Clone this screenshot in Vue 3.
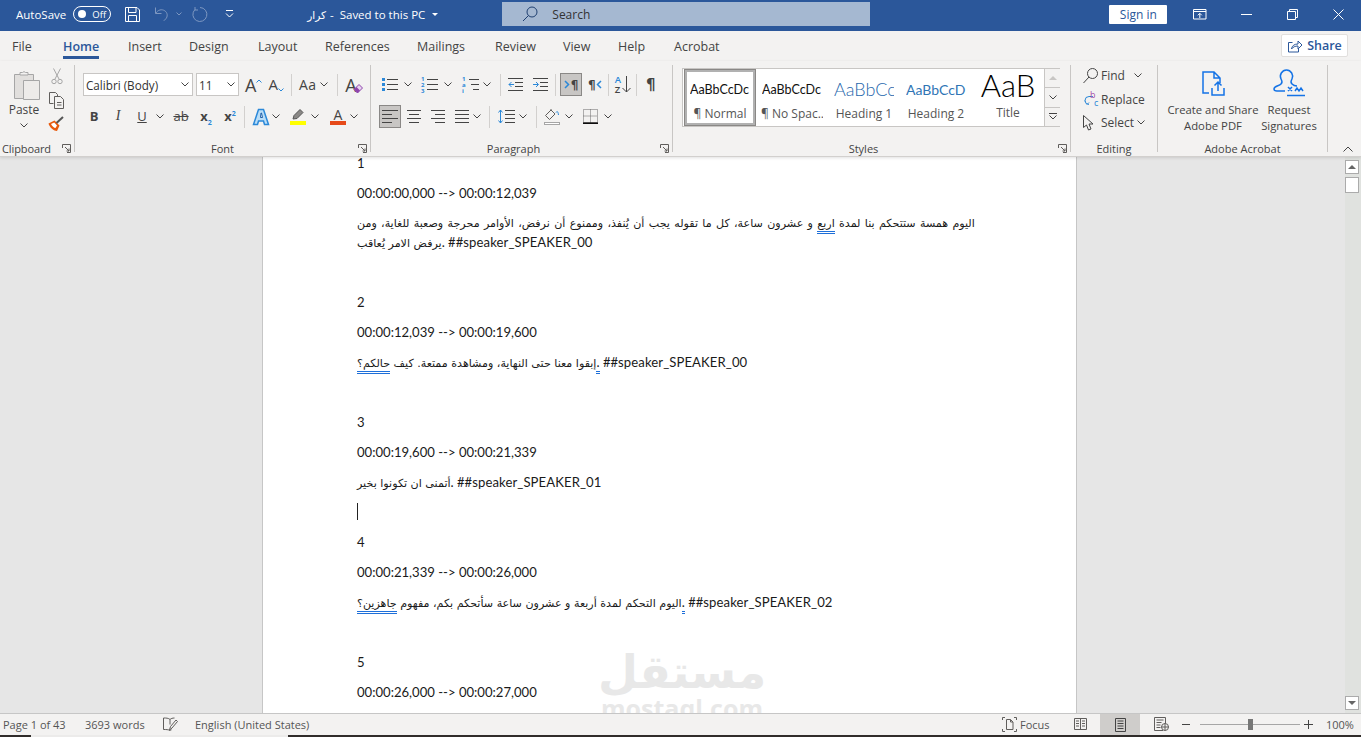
<template>
  <div class="word">
    <header class="titlebar">
      <span class="autosave">AutoSave</span>
      <span class="toggle"><i class="knob"></i><b>Off</b></span>
      <svg class="ic white save" width="17" height="17" viewBox="0 0 17 17"><path d="M1.5 1.5h11.5l2.500 2.500v11.500h-14z M4.500 1.500v5h7.500v-5 M4.500 15.500v-6h8v6" /></svg>
      <svg class="ic dim undo" width="16" height="16" viewBox="0 0 16 16"><path d="M1.500 1.500v6h6 M1.800 7.300c2-3.500 6-4.500 9-2.500 3 2 3 6 1 8l-2 2" /></svg>
      <svg class="ic dim chev-dim" width="6" height="4" viewBox="0 0 6 4"><path d="M.5.500 3 3 5.500.500" /></svg>
      <svg class="ic dim redo" width="17" height="16" viewBox="0 0 17 16"><path d="M3 3.500a7 7 0 1 0 5-2 M3 1v3h3" /></svg>
      <svg class="ic white qat" width="9" height="8" viewBox="0 0 9 8"><path d="M1 .5h7 M1 3.500l3.500 3.500 3.500-3.500" /></svg>
      <span class="doc-title"><span class="ar-title">كرار</span> &nbsp;-&nbsp; Saved to this PC</span>
      <i class="caret-w"></i>
      <div class="search">
        <svg class="ic navy" width="16" height="16" viewBox="0 0 16 16"><circle cx="10" cy="6" r="5" /><path d="M6.500 9.500 1 15" /></svg>
        <span>Search</span>
      </div>
      <button class="signin">Sign in</button>
      <svg class="ic white win-a" width="14" height="11" viewBox="0 0 14 11"><path d="M.5.500h12.500v9.500h-12.500z M.5 2.500h12.500 M6.800 9V4.500 M4.800 6.300l2-2 2 2" /></svg>
      <svg class="ic white win-b" width="11" height="1" viewBox="0 0 11 1"><path d="M0 .5h11" /></svg>
      <svg class="ic white win-c" width="11" height="11" viewBox="0 0 11 11"><path d="M.5 2.500h8v8h-8z M2.500 2.500v-2h8v8h-2" /></svg>
      <svg class="ic white win-d" width="11" height="11" viewBox="0 0 11 11"><path d="M.5.500l10 10 M10.500.500l-10 10" /></svg>
    </header>

    <nav class="tabs">
      <span v-for="tab in tabs" :key="tab" class="tab" :class="{ active: tab === 'Home' }">{{ tab }}</span>
      <button class="share">
        <svg class="ic blue-d" width="16" height="14" viewBox="0 0 16 14"><path d="M5.500 3.500h-4v9.500h10v-3.500 M4.500 10c.5-3.500 3-5 6.500-5v-3l4 4-4 4v-3c-3 0-5 1-6.500 3z" /></svg>
        Share
      </button>
    </nav>

    <section class="ribbon">
      <div class="group clip">
        <div class="paste">
          <svg class="paste-ic" width="28" height="32" viewBox="0 0 28 32"><path class="s1" d="M1.500 5.500h19v24h-19z" /><path class="s2" d="M7 6V3.500h2.500a2 2 0 0 1 3 0H15V6z" /><path class="s3" d="M10.500 11.500h16v19h-16z" /></svg>
          <span>Paste</span>
          <svg class="ic chev chev-paste" viewBox="0 0 8 5"><path d="M.5.500 4 4 7.500.500" /></svg>
        </div>
        <div class="clip-tools">
          <svg class="ic light" width="12" height="17" viewBox="0 0 12 17"><path d="M2.500.5 8 11 M9.500.5 4 11" /><circle cx="3" cy="13.500" r="2.200" /><circle cx="9" cy="13.500" r="2.200" /></svg>
          <svg class="ic grey" width="17" height="17" viewBox="0 0 17 17"><path d="M5.500 11.500h-4v-11h6l2 2v2" /><path d="M6.500 4.500h6l3 3v9h-9z M9 10.500h4.500 M9 13h4.500" /></svg>
          <svg width="17" height="15" viewBox="0 0 17 15"><path fill="#e8590c" d="M.5 7.500 6.500 4.500l5 5-2.500 5.500c-3 0-7.500-3.500-8.500-7.500z" /><path fill="#fff" d="M3 8l3.200-1.500 2.800 3-1.500 2.500C6 12 4 10 3 8z" /><path fill="none" stroke="#555" stroke-width="2" d="M8.500 7 15 1" /></svg>
        </div>
        <div class="label clip-label">Clipboard</div>
        <svg class="ic launch" viewBox="0 0 9 9"><path d="M.5 4V.5H8.500V8.500H5 M3 3l4 4 M7 4.500V7H4.500" /></svg>
      </div>
      <i class="rsep"></i>

      <div class="group font">
        <div class="row row-1">
          <div class="combo name"><span>Calibri (Body)</span><svg class="ic chev" viewBox="0 0 8 5"><path d="M.5.500 4 4 7.500.500" /></svg></div>
          <div class="combo size"><span>11</span><svg class="ic chev" viewBox="0 0 8 5"><path d="M.5.500 4 4 7.500.500" /></svg></div>
          <span class="letter big m6">A<svg class="ic blue up" width="6" height="4" viewBox="0 0 6 4"><path d="M.5 3.500 3 1l2.500 2.500" /></svg></span>
          <span class="letter mid m6">A<svg class="ic blue up" width="6" height="4" viewBox="0 0 6 4"><path d="M.5.500 3 3 5.500.500" /></svg></span>
          <i class="vsep m7"></i>
          <span class="letter aa m7">Aa</span>
          <svg class="ic chev m4" viewBox="0 0 8 5"><path d="M.5.500 4 4 7.500.500" /></svg>
          <i class="vsep m9"></i>
          <span class="letter big clear m7">A<svg width="11" height="11" viewBox="0 0 11 11"><path fill="#e8d5ef" stroke="#8e44ad" d="M1 6.500 6 1.500 9.500 5l-5 5z" /><path fill="#8e44ad" d="M3.500 4 7 7.500 4.500 10 1 6.500z" /></svg></span>
        </div>
        <div class="row row-2">
          <b class="fmt f-b">B</b>
          <i class="fmt f-i m8">I</i>
          <u class="fmt f-u m8">U</u>
          <svg class="ic chev m6" viewBox="0 0 8 5"><path d="M.5.500 4 4 7.500.500" /></svg>
          <s class="fmt f-s m7">ab</s>
          <span class="fmt f-x m7">x<sub>2</sub></span>
          <span class="fmt f-x m8">x<sup>2</sup></span>
          <i class="vsep m6"></i>
          <svg class="m7" width="18" height="18" viewBox="0 0 18 18"><path fill="#b9ddf7" stroke="#2b88d8" stroke-width="1.500" d="M6.500 1.500h5l5 15h-4l-1-3.500H6.500l-1 3.500h-4z" /><path fill="#fff" stroke="#1d5fa8" d="M8.500 9.500 9 5l.5 0 1 4.500z" /></svg>
          <svg class="ic chev m2" viewBox="0 0 8 5"><path d="M.5.500 4 4 7.500.500" /></svg>
          <span class="swatch m10">
            <svg class="ic grey" width="16" height="12" viewBox="0 0 16 12"><path d="M3 10 4 6.500l6-6 3 3-6 6z" fill="#8a8886" stroke="#555" /></svg>
            <i class="bar yellow"></i>
          </span>
          <svg class="ic chev m5" viewBox="0 0 8 5"><path d="M.5.500 4 4 7.500.500" /></svg>
          <span class="swatch m11"><em>A</em><i class="bar red"></i></span>
          <svg class="ic chev m4" viewBox="0 0 8 5"><path d="M.5.500 4 4 7.500.500" /></svg>
        </div>
        <div class="label">Font</div>
        <svg class="ic launch" viewBox="0 0 9 9"><path d="M.5 4V.5H8.500V8.500H5 M3 3l4 4 M7 4.500V7H4.500" /></svg>
      </div>
      <i class="rsep"></i>

      <div class="group para">
        <div class="row row-1">
          <svg class="ic" width="16" height="15" viewBox="0 0 16 15"><path d="M5 2.500h11 M5 7.500h11 M5 12.500h11" /><path class="bl" d="M0 1h3v3H0z M0 6h3v3H0z M0 11h3v3H0z" /></svg>
          <svg class="ic chev m6" viewBox="0 0 8 5"><path d="M.5.500 4 4 7.500.500" /></svg>
          <span class="list-ic m9"><span class="num"><i>1</i><i>2</i><i>3</i></span><svg class="ic" width="11" height="13" viewBox="0 0 11 13"><path d="M0 1.500h11 M0 6.500h11 M0 11.500h11" /></svg></span>
          <svg class="ic chev m6" viewBox="0 0 8 5"><path d="M.5.500 4 4 7.500.500" /></svg>
          <span class="list-ic m10"><span class="num"><i>1</i><i>a</i><i>i</i></span><svg class="ic" width="11" height="13" viewBox="0 0 11 13"><path d="M1 1.500h10 M3 6.500h8 M5 11.500h6" /></svg></span>
          <svg class="ic chev m4" viewBox="0 0 8 5"><path d="M.5.500 4 4 7.500.500" /></svg>
          <i class="vsep m9"></i>
          <svg class="ic m7" width="15" height="13" viewBox="0 0 15 13"><path d="M0 .5h15 M7 4.500h8 M7 8.500h8 M0 12.500h15" /><path class="blue-s" d="M6 6.500H1 M3.500 4 1 6.500 3.500 9" /></svg>
          <svg class="ic m10" width="15" height="13" viewBox="0 0 15 13"><path d="M0 .5h15 M7 4.500h8 M7 8.500h8 M0 12.500h15" /><path class="blue-s" d="M0 6.500h5 M3 4l2.500 2.500L3 9" /></svg>
          <i class="vsep m7"></i>
          <span class="active-btn ltr m4"><svg class="ic blue" width="6" height="9" viewBox="0 0 6 9"><path stroke-width="1.500" d="M1 1l3.500 3.500L1 8" /></svg><b>¶</b></span>
          <span class="rtl m6"><b>¶</b><svg class="ic blue" width="6" height="9" viewBox="0 0 6 9"><path stroke-width="1.500" d="M5 1 1.500 4.500 5 8" /></svg></span>
          <i class="vsep m6"></i>
          <span class="sort m6"><span class="az"><i>A</i><i>Z</i></span><svg class="ic" width="9" height="17" viewBox="0 0 9 17"><path d="M4.500 0v16 M.5 12l4 4 4-4" /></svg></span>
          <i class="vsep m5"></i>
          <b class="pil m9">¶</b>
        </div>
        <div class="row row-2">
          <span class="active-btn"><svg class="ic" width="16" height="13" viewBox="0 0 16 13"><path d="M0 .5h16 M0 4.500h10 M0 8.500h16 M0 12.500h10" /></svg></span>
          <svg class="ic m6" width="14" height="13" viewBox="0 0 14 13"><path d="M0 .5h14 M2 4.500h10 M0 8.500h14 M2 12.500h10" /></svg>
          <svg class="ic m10" width="14" height="13" viewBox="0 0 14 13"><path d="M0 .5h14 M4 4.500h10 M0 8.500h14 M4 12.500h10" /></svg>
          <svg class="ic m10" width="14" height="13" viewBox="0 0 14 13"><path d="M0 .5h14 M0 4.500h14 M0 8.500h14 M0 12.500h14" /></svg>
          <svg class="ic chev m4" viewBox="0 0 8 5"><path d="M.5.500 4 4 7.500.500" /></svg>
          <i class="vsep m8"></i>
          <svg class="ic m8" width="17" height="15" viewBox="0 0 17 15"><path d="M7 1.500h10 M7 5.500h10 M7 9.500h10 M7 13.500h10" /><path class="blue-s" d="M2.500 1v13 M.5 3.500l2-2.500 2 2.500 M.5 11.500l2 2.500 2-2.500" /></svg>
          <svg class="ic chev m4" viewBox="0 0 8 5"><path d="M.5.500 4 4 7.500.500" /></svg>
          <i class="vsep m9"></i>
          <span class="swatch shade m7">
            <svg class="ic grey" width="16" height="12" viewBox="0 0 16 12"><path d="M7 1 1.500 6.500l4 4 5.500-5.500z M7 1V0" /><path class="blue-s" d="M12 3.500c1-1.500 2-1.500 2.500 2.500" /></svg>
            <i class="bar hollow"></i>
          </span>
          <svg class="ic chev m5" viewBox="0 0 8 5"><path d="M.5.500 4 4 7.500.500" /></svg>
          <svg class="ic borders m10" width="15" height="15" viewBox="0 0 15 15"><path stroke-dasharray="1 1" d="M.5.500h14v13H.5z M7.500.5v13 M.5 7h14" /><path stroke="#000" stroke-width="1.500" d="M0 14.200h15" /></svg>
          <svg class="ic chev m6" viewBox="0 0 8 5"><path d="M.5.500 4 4 7.500.500" /></svg>
        </div>
        <div class="label para-label">Paragraph</div>
        <svg class="ic launch" viewBox="0 0 9 9"><path d="M.5 4V.5H8.500V8.500H5 M3 3l4 4 M7 4.500V7H4.500" /></svg>
      </div>
      <i class="rsep"></i>

      <div class="group styles">
        <div class="gallery">
          <div v-for="st in styleItems" :key="st.cap" class="style" :class="[st.cls, { selected: st.cap === '¶ Normal' }]">
            <div class="sample"><span>{{ st.text }}</span></div>
            <div class="cap">{{ st.cap }}</div>
          </div>
          <div class="g-scroll">
            <span class="off"><i class="tri-up"></i></span>
            <span><svg class="ic chev" viewBox="0 0 8 5"><path d="M.5.500 4 4 7.500.500" /></svg></span>
            <span class="more"><i class="line"></i><svg class="ic chev" viewBox="0 0 8 5"><path d="M.5.500 4 4 7.500.500" /></svg></span>
          </div>
        </div>
        <div class="label styles-label">Styles</div>
        <svg class="ic launch" viewBox="0 0 9 9"><path d="M.5 4V.5H8.500V8.500H5 M3 3l4 4 M7 4.500V7H4.500" /></svg>
      </div>
      <i class="rsep"></i>

      <div class="group edit">
        <div class="edit-list">
          <div class="edit-row">
            <svg class="ic" width="15" height="16" viewBox="0 0 15 16"><circle cx="9.500" cy="5.500" r="5" /><path d="M6 9 .5 15" /></svg>
            <span>Find</span>
            <svg class="ic chev find-chev" viewBox="0 0 8 5"><path d="M.5.500 4 4 7.500.500" /></svg>
          </div>
          <div class="edit-row">
            <span class="rep"><svg class="ic blue" width="10" height="13" viewBox="0 0 10 13"><path d="M9 2.500H5a3.500 3.500 0 0 0 0 8 M1.500 7l-1 0M3 10.500 5 8.500" /></svg><i class="rb">b</i><i class="rc">c</i></span>
            <span>Replace</span>
          </div>
          <div class="edit-row">
            <svg class="ic" width="11" height="16" viewBox="0 0 11 16"><path d="M.5.500v12l3-2.500 2 5 2.500-1-2-5h4z" /></svg>
            <span class="sel">Select</span>
            <svg class="ic chev sel-chev" viewBox="0 0 8 5"><path d="M.5.500 4 4 7.500.500" /></svg>
          </div>
        </div>
        <div class="label">Editing</div>
      </div>
      <i class="rsep"></i>

      <div class="group acro">
        <div class="acro-btns">
          <div class="acro-btn create">
            <svg class="ic acro-blue" width="24" height="26" viewBox="0 0 24 26"><path d="M8 22H2V1h11l6 6v5 M13 1v6h6" /><path d="M11 17v7h12v-7 M17 20v-8 M13.500 14.500 17 11l3.500 3.500" /></svg>
            <span>Create and Share<br />Adobe PDF</span>
          </div>
          <div class="acro-btn sign">
            <svg class="ic acro-blue" width="32" height="28" viewBox="0 0 32 28"><path d="M1 20c0-3 5-3 7-5 2-2 1-3 0-5C6 6 9 1 13.500 1S21 6 19 10c-1 2-2 3 0 5 1 1 2 2 5 2 M1 20c0 1 1 2 3 2h8 M14 26.500h18 M15 18l4 4 M19 18l-4 4 M22 22l2-3 2 3 2-3 2 3" /></svg>
            <span>Request<br />Signatures</span>
          </div>
        </div>
        <div class="label">Adobe Acrobat</div>
      </div>
      <i class="rsep"></i>
      <svg class="ic collapse" width="10" height="6" viewBox="0 0 10 6"><path d="M.5 5.500 5 1l4.500 4.500" /></svg>
    </section>

    <main class="docarea">
      <article class="page">
        <p class="first">1</p>
        <p>00:00:00,000 --&gt; 00:00:12,039</p>
        <p class="two-line">
          <span class="ar line-1">اليوم همسة ستتحكم بنا لمدة <span class="dbl">اربع</span> و عشرون ساعة، كل ما تقوله يجب أن يُنفذ، وممنوع أن نرفض، الأوامر محرجة وصعبة للغاية، ومن</span>
          <span class="line-2"><span class="ar">يرفض الامر يُعاقب</span>. <span class="sp">##speaker_SPEAKER_00</span></span>
        </p>
        <p>&nbsp;</p>
        <p>2</p>
        <p>00:00:12,039 --&gt; 00:00:19,600</p>
        <p><span class="ar">إبقوا معنا حتى النهاية، ومشاهدة ممتعة. كيف <span class="dbl">حالكم؟</span></span><span class="dbl">.</span> <span class="sp">##speaker_SPEAKER_00</span></p>
        <p>&nbsp;</p>
        <p>3</p>
        <p>00:00:19,600 --&gt; 00:00:21,339</p>
        <p><span class="ar">أتمنى ان تكونوا بخير</span>. <span class="sp">##speaker_SPEAKER_01</span></p>
        <p class="cursor"><i></i></p>
        <p>4</p>
        <p>00:00:21,339 --&gt; 00:00:26,000</p>
        <p><span class="ar">اليوم التحكم لمدة أربعة و عشرون ساعة سأتحكم بكم، مفهوم <span class="dbl">جاهزين؟</span></span><span class="dbl">.</span> <span class="sp">##speaker_SPEAKER_02</span></p>
        <p>&nbsp;</p>
        <p>5</p>
        <p>00:00:26,000 --&gt; 00:00:27,000</p>
        <div class="mark">
          <span class="mark-ar">مستقل</span>
          <span class="mark-en">mostaql.com</span>
        </div>
      </article>
      <aside class="vscroll">
        <span class="sb-btn"><i class="tri-up"></i></span>
        <span class="sb-thumb"></span>
        <span class="sb-track"></span>
        <span class="sb-btn"><i class="tri-down"></i></span>
      </aside>
    </main>

    <footer class="status">
      <span class="st-page">Page 1 of 43</span>
      <span class="st-words">3693 words</span>
      <svg class="ic grey st-proof" width="15" height="14" viewBox="0 0 15 14"><path d="M7 2.500C5.500 1 3 1 .5 1v11.500c2.500 0 5 0 6.500 1 .5-.3 1-.6 1.500-.7 M7 2.500v5 M7 2.500c1-1 2.500-1.500 4.500-1.500" /><path d="M6.500 13l1-3.500 5.500-6.500 1.500 1.500-5.500 6.500z" /></svg>
      <span class="st-lang">English (United States)</span>
      <svg class="ic grey st-focus" width="15" height="15" viewBox="0 0 15 15"><path d="M.5 3V.5H3 M12 .5h2.500V3 M.5 12v2.500H3 M12 14.500h2.500V12 M4.500 2.500h4l2.500 2.500v7.500h-6.500z M8.500 2.500V5h2.500" /></svg>
      <span class="st-focus-t">Focus</span>
      <svg class="ic grey st-read" width="13" height="13" viewBox="0 0 13 13"><path d="M.5.500h12v11h-12z M6.500.5v11 M2 3h3 M2 5.500h3 M2 8h3 M8 3h3 M8 5.500h3 M8 8h3" /></svg>
      <span class="st-print"><svg class="ic" width="11" height="14" viewBox="0 0 11 14"><path d="M.5.500h10v13H.5z M2.500 3h6 M2.500 5.500h6 M2.500 8h6 M2.500 10.500h6" /></svg></span>
      <svg class="ic grey st-web" width="15" height="14" viewBox="0 0 15 14"><path d="M9 13.500H.5V.5h11v6 M2.500 3h7 M2.500 5.500h5 M2.500 8h4 M2.500 10.500h4" /><circle cx="11" cy="10" r="3.500" /><path d="M7.500 10h7 M11 6.500v7" /></svg>
      <i class="z-minus"></i>
      <span class="slider"><i></i></span>
      <i class="z-plus"></i>
      <span class="st-zoom">100%</span>
    </footer>
    <div class="taskstrip"><i class="t1"></i><i class="t2"></i><i class="t3"></i></div>
  </div>
</template>

<script setup>
const tabs = ['File', 'Home', 'Insert', 'Design', 'Layout', 'References', 'Mailings', 'Review', 'View', 'Help', 'Acrobat']

const styleItems = [
  { cap: '¶ Normal', text: 'AaBbCcDc', cls: 's-normal' },
  { cap: '¶ No Spac...', text: 'AaBbCcDc', cls: 's-normal' },
  { cap: 'Heading 1', text: 'AaBbCc', cls: 's-h1' },
  { cap: 'Heading 2', text: 'AaBbCcD', cls: 's-h2' },
  { cap: 'Title', text: 'AaB', cls: 's-title' }
]
</script>

<style>
html, body { margin: 0; overflow: hidden; }
</style>

<style scoped>
.word {
  display: flex;
  flex-direction: column;
  height: 737px;
  overflow: hidden;
  background: #e6e6e6;
  font-family: "Open Sans", "Noto Sans", sans-serif;
  font-size: 12px;
  color: #444;
}
i, em { font-style: normal; }
.ic { fill: none; stroke: #444; stroke-width: 1; flex: none; }
.ic.white { stroke: #fff; }
.ic.dim { stroke: #7d97c1; }
.ic.navy { stroke: #1f3f70; }
.ic.grey { stroke: #605e5c; }
.ic.light { stroke: #a6a6a6; }
.ic.blue { stroke: #2b88d8; }
.ic.blue-d { stroke: #2b579a; }
.ic.acro-blue { stroke: #1473e6; stroke-width: 1.5; }
.ic.borders { stroke: #666; }
.blue-s { stroke: #2b88d8; }
.bl { fill: #2b88d8; stroke: none; }
.chev { width: 8px; height: 5px; }

.m2 { margin-left: 2px; }
.m4 { margin-left: 4px; }
.m5 { margin-left: 5px; }
.m6 { margin-left: 6px; }
.m7 { margin-left: 7px; }
.m8 { margin-left: 8px; }
.m9 { margin-left: 9px; }
.m10 { margin-left: 10px; }
.m11 { margin-left: 11px; }

/* title bar */
.titlebar {
  display: flex;
  align-items: center;
  flex: none;
  box-sizing: border-box;
  height: 31px;
  padding-bottom: 3px;
  background: #2b579a;
  color: #fff;
}
.autosave { margin-left: 16px; font-size: 11.5px; }
.toggle {
  display: flex;
  align-items: center;
  box-sizing: border-box;
  width: 38px;
  height: 16px;
  margin-left: 7px;
  border: 1px solid #fff;
  border-radius: 8px;
  font-size: 9.5px;
}
.toggle b { font-weight: 400; margin-left: 6px; }
.knob { width: 8px; height: 8px; margin-left: 4px; border-radius: 50%; background: #fff; }
.save { margin-left: 13px; }
.undo { margin-left: 13px; }
.chev-dim { margin-left: 6px; }
.redo { margin-left: 10px; }
.qat { margin-left: 16px; }
.doc-title { margin-left: 73px; font-size: 11.5px; white-space: nowrap; }
.ar-title { font-family: "DejaVu Sans", sans-serif; font-size: 10.5px; margin-right: -2px; }
.caret-w { margin-left: 7px; border: 3px solid transparent; border-top: 3px solid #fff; border-bottom: 0; }
.search {
  display: flex;
  align-items: center;
  width: 368px;
  height: 24px;
  margin-left: 64px;
  background: #a5b8d1;
  color: #333;
  font-size: 12px;
}
.search svg { margin-left: 20px; }
.search span { margin-left: 14px; }
.signin {
  width: 58px;
  height: 19px;
  margin-left: 239px;
  padding: 0;
  border: 0;
  border-radius: 1px;
  background: #fff;
  color: #2b579a;
  font: 12px "Open Sans", sans-serif;
}
.win-a { margin-left: 26px; }
.win-b { margin-left: 34px; }
.win-c { margin-left: 35px; }
.win-d { margin-left: 35px; }

/* tabs */
.tabs {
  display: grid;
  grid-template-columns: 51px 65px 61px 69px 67px 92px 78px 68px 55px 56px 1fr auto;
  align-items: center;
  flex: none;
  height: 30px;
  padding-left: 12px;
  background: #f3f2f1;
  font-size: 12.5px;
  color: #444;
}
.tab { position: relative; justify-self: start; padding-top: 1px; line-height: 29px; }
.tab.active { font-weight: 600; color: #2b579a; }
.tab.active::after {
  content: "";
  position: absolute;
  left: 0;
  right: 0;
  bottom: 2px;
  height: 3px;
  background: #2b579a;
}
.share {
  display: flex;
  align-items: center;
  justify-content: center;
  gap: 4px;
  width: 67px;
  height: 23px;
  margin: -1px 13px 0 0;
  padding: 0;
  border: 1px solid #e1dfdd;
  border-radius: 2px;
  background: #fff;
  color: #2b579a;
  font: 600 12.5px "Open Sans", sans-serif;
}

/* ribbon */
.ribbon {
  position: relative;
  z-index: 2;
  display: flex;
  flex: none;
  height: 96px;
  background: #f3f2f1;
  border-bottom: 1px solid #d2d0ce;
  box-sizing: border-box;
  box-shadow: 0 1px 3px rgba(0, 0, 0, 0.12);
}
.rsep { flex: none; width: 1px; margin: 4px 0 4px; background: #c8c6c4; }
.group { position: relative; box-sizing: border-box; height: 95px; }
.label {
  position: absolute;
  left: 0;
  right: 0;
  bottom: 0;
  height: 16px;
  line-height: 17px;
  text-align: center;
  font-size: 11px;
  color: #444;
}
.launch { position: absolute; right: 3px; bottom: 3px; width: 9px; height: 9px; stroke: #605e5c; }

.row { display: flex; align-items: center; height: 23px; }
.row-1 { margin-top: 12px; }
.row-2 { margin-top: 9px; }
.vsep { flex: none; width: 1px; height: 22px; background: #d2d0ce; }

.clip { display: flex; width: 74px; }
.paste {
  display: flex;
  flex-direction: column;
  align-items: center;
  width: 48px;
  padding-top: 8px;
  box-sizing: border-box;
  font-size: 12px;
  color: #444;
}
.paste-ic { margin-left: 5px; }
.paste span { line-height: 17px; }
.chev-paste { margin-top: 5px; }
.paste-ic .s1 { fill: #e1dfdd; stroke: #a6a6a6; }
.paste-ic .s2 { fill: #f3f2f1; stroke: #a6a6a6; }
.paste-ic .s3 { fill: #edebe9; stroke: #a6a6a6; }
.clip-tools {
  display: flex;
  flex-direction: column;
  align-items: center;
  width: 17px;
  padding-top: 7px;
  gap: 7px;
}
.clip-label { right: auto; left: 2px; text-align: left; letter-spacing: -0.1px; }

.font { width: 295px; }
.font .row-1 { padding-left: 8px; }
.font .row-2 { padding-left: 11px; }
.combo {
  display: flex;
  align-items: center;
  justify-content: space-between;
  box-sizing: border-box;
  height: 23px;
  padding: 0 3px 0 2px;
  border: 1px solid #c8c6c4;
  background: #fff;
  color: #333;
  font-size: 11.7px;
}
.combo.name { width: 110px; }
.combo.size { width: 43px; margin-left: 3px; }
.letter { display: flex; color: #444; line-height: 1; }
.letter.big { font-size: 18px; }
.letter.mid { font-size: 15px; align-items: flex-end; }
.letter.aa { font-size: 14px; letter-spacing: 0.4px; }
.letter .up { margin-top: 3px; }
.letter.clear { align-items: flex-end; }
.letter.clear svg { margin-left: -4px; }
.fmt { width: 16px; margin-top: -2px; text-align: center; color: #444; font-size: 13px; line-height: 16px; flex: none; }
.f-b { font-weight: 700; }
.f-i { font-family: "Liberation Serif", serif; font-style: italic; font-size: 14px; }
.f-s { width: 20px; }
.f-x { font-weight: 700; font-size: 13px; }
.f-x sub, .f-x sup { color: #2b88d8; font-size: 7px; line-height: 0; }
.swatch { display: flex; flex-direction: column; align-items: center; width: 16px; flex: none; }
.swatch em { font-size: 14px; line-height: 13px; color: #444; }
.bar { display: block; width: 16px; height: 4px; margin-top: 0; }
.yellow { background: #ffff00; }
.red { background: #e64a19; }
.hollow { height: 3px; border: 1px solid #a6a6a6; box-sizing: border-box; background: #fff; }

.para { width: 301px; }
.para .row-1 { padding-left: 11px; }
.para .row-2 { padding-left: 8px; }
.list-ic { display: flex; align-items: center; gap: 2px; flex: none; }
.num { display: flex; flex-direction: column; color: #2b88d8; font-size: 6px; line-height: 6px; font-weight: 700; width: 4px; }
.active-btn {
  display: flex;
  align-items: center;
  justify-content: center;
  flex: none;
  box-sizing: border-box;
  width: 22px;
  height: 23px;
  border: 1px solid #8a8886;
  background: #c8c6c4;
}
.ltr { gap: 1px; }
.ltr b, .rtl b, .pil { font-family: "DejaVu Sans", sans-serif; font-size: 12px; font-weight: 700; color: #444; }
.rtl { display: flex; align-items: center; flex: none; }
.pil { font-size: 15px; }
.sort { display: flex; align-items: center; gap: 1px; flex: none; }
.az { display: flex; flex-direction: column; font-size: 9.500px; line-height: 10px; font-weight: 600; }
.az i:first-child { color: #2b88d8; }
.para-label { right: 16px; }
.shade .bar { margin-top: 1px; }

.styles { width: 397px; }
.gallery {
  display: flex;
  box-sizing: border-box;
  width: 378px;
  height: 59px;
  margin: 7px 0 0 9px;
  border: 1px solid #c8c6c4;
  background: #fff;
}
.style { flex: none; box-sizing: border-box; width: 72px; padding: 4px 5px 0; text-align: center; }
.style.selected { border: 3px solid #b1b1b1; outline: 1px solid #8a8886; outline-offset: -1px; padding: 0 2px; margin-left: 1px; }
.sample { display: flex; align-items: center; justify-content: center; height: 32px; overflow: hidden; white-space: nowrap; font-family: Lato, sans-serif; }
.selected .sample { margin-top: 1px; }
.sample span { display: block; overflow: hidden; }
.s-normal .sample { color: #111; font-size: 12.5px; }
.s-normal .sample span { width: 60px; text-align: left; }
.s-h1 .sample { color: #1f68ad; font-size: 18px; font-weight: 300; }
.s-h1 .sample span { width: 60px; text-align: left; }
.s-h2 .sample { color: #2f75b5; font-size: 14px; }
.s-h2 .sample span { width: 60px; text-align: left; }
.s-title .sample { height: 24px; margin: 2px 0 6px; align-items: flex-start; color: #000; font-size: 31px; font-weight: 300; line-height: 20px; }
.s-title .sample span { width: 64px; height: 24px; }
.cap { margin-top: 1px; font-size: 12px; line-height: 16px; color: #555; white-space: nowrap; overflow: hidden; }
.g-scroll { display: flex; flex-direction: column; flex: none; width: 16px; margin-left: auto; }
.g-scroll span {
  display: flex;
  flex-direction: column;
  align-items: center;
  justify-content: center;
  flex: 1;
  box-sizing: border-box;
  border-left: 1px solid #c8c6c4;
  border-bottom: 1px solid #c8c6c4;
  background: #f3f2f1;
}
.g-scroll span:last-child { border-bottom: 0; }
.line { width: 8px; height: 1px; background: #444; margin-bottom: 1px; }
.tri-up { border: 4px solid transparent; border-bottom: 4px solid #c8c6c4; border-top: 0; }
.tri-down { border: 4px solid transparent; border-top: 4px solid #666; border-bottom: 0; }
.styles-label { right: 16px; }

.edit { width: 86px; }
.edit-list { display: flex; flex-direction: column; padding: 3px 0 0 12px; }
.edit-row { display: flex; align-items: center; height: 23.500px; gap: 4px; font-size: 12px; color: #444; }
.rep { position: relative; display: block; width: 14px; height: 18px; }
.rep svg { position: absolute; left: 1px; top: 4px; }
.rb, .rc { position: absolute; font-size: 9px; line-height: 9px; }
.rb { left: 7px; top: 0; color: #a64ca6; }
.rc { left: 11px; top: 8px; color: #2b88d8; }
.find-chev { margin-left: 5px; }
.sel-chev { margin-left: -1px; }
.sel { margin-left: 3px; }
.edit-row:first-child .ic:first-child { margin-right: -1px; }

.acro { width: 169px; }
.acro-btns { display: flex; }
.acro-btn {
  display: flex;
  flex-direction: column;
  align-items: center;
  text-align: center;
  box-sizing: border-box;
  height: 74px;
  font-size: 11.300px;
  line-height: 16px;
  color: #444;
  white-space: nowrap;
}
.create { width: 110px; padding-top: 10px; }
.create span { margin-top: 5px; }
.sign { width: 52px; margin-left: -5px; padding-top: 8px; }
.sign span { margin-top: 5px; }
.collapse { position: absolute; right: 8px; bottom: 4px; }

/* document */
.docarea { display: flex; flex: 1; min-height: 0; }
.page {
  position: relative;
  box-sizing: border-box;
  width: 815px;
  margin-left: 262px;
  padding: 0 0 0 94px;
  overflow: hidden;
  border: solid #c6c6c6;
  border-width: 0 1px;
  background: #fff;
  color: #1a1a1a;
  font-family: Lato, "Open Sans", sans-serif;
  font-size: 13.100px;
}
.page p { height: 19px; margin: 0 0 11px; line-height: 19px; white-space: nowrap; }
.page p.first { margin-top: -3px; }
.page p.two-line { height: 38px; }
.ar { font-family: "DejaVu Sans", sans-serif; font-size: 11.100px; }
.sp { letter-spacing: 0.1px; }
.two-line span.line-1, .two-line span.line-2 { display: block; height: 19px; }
.line-1 { word-spacing: 0.8px; }
.dbl { padding-bottom: 1px; border-bottom: 3px double #1e6fd9; }
.cursor i { display: block; width: 1px; height: 17px; background: #222; }
.mark {
  position: absolute;
  left: 337px;
  top: 489px;
  display: flex;
  flex-direction: column;
  align-items: center;
  width: 164px;
  color: #e8e8e8;
  pointer-events: none;
}
.mark-ar { font-family: "DejaVu Sans", sans-serif; font-weight: 700; font-size: 46px; line-height: 52px; }
.mark-en { font-family: "Open Sans", sans-serif; font-weight: 700; font-size: 25px; line-height: 20px; }

.vscroll {
  display: flex;
  flex-direction: column;
  box-sizing: border-box;
  width: 16px;
  margin-left: auto;
  padding: 3px 2px 3px 0;
  background: #e0e2df;
}
.sb-btn, .sb-thumb {
  display: flex;
  align-items: center;
  justify-content: center;
  flex: none;
  box-sizing: border-box;
  width: 14px;
  height: 14px;
  border: 1px solid #ababab;
  background: #fff;
}
.sb-btn .tri-up { border-bottom-color: #666; }
.sb-thumb { height: 16px; margin-top: 3px; }
.sb-track { flex: 1; }

/* status bar */
.status {
  display: flex;
  align-items: center;
  flex: none;
  box-sizing: border-box;
  height: 22px;
  padding-bottom: 1px;
  border-top: 1px solid #c6c6c6;
  background: #f3f2f1;
  font-size: 11px;
  color: #555;
}
.st-page { margin-left: 3px; width: 63px; }
.st-words { margin-left: 19px; width: 60px; }
.st-proof { margin-left: 18px; }
.st-lang { margin-left: 17px; width: 117px; white-space: nowrap; }
.st-focus { margin-left: 690px; }
.st-focus-t { margin-left: 3px; width: 31px; }
.st-read { margin-left: 23px; }
.st-print { display: flex; align-items: center; justify-content: center; width: 40px; height: 21px; margin: 0 0 -1px 13px; background: #cfcdcb; }
.st-web { margin-left: 14px; }
.z-minus { width: 8px; height: 1px; margin-left: 13px; background: #444; }
.slider { position: relative; display: block; width: 100px; height: 1px; margin-left: 10px; background: #a6a6a6; }
.slider i { position: absolute; left: 48px; top: -5px; width: 5px; height: 11px; background: #777; }
.z-plus { position: relative; width: 9px; height: 1px; margin-left: 4px; background: #444; }
.z-plus::after { content: ""; position: absolute; left: 4px; top: -4px; width: 1px; height: 9px; background: #444; }
.st-zoom { margin-left: 13px; }

.taskstrip { display: flex; flex: none; height: 2px; }
.t1 { width: 31px; background: #302c2a; }
.t2 { width: 257px; background: #ecebea; }
.t3 { flex: 1; background: #302c2a; }
</style>
